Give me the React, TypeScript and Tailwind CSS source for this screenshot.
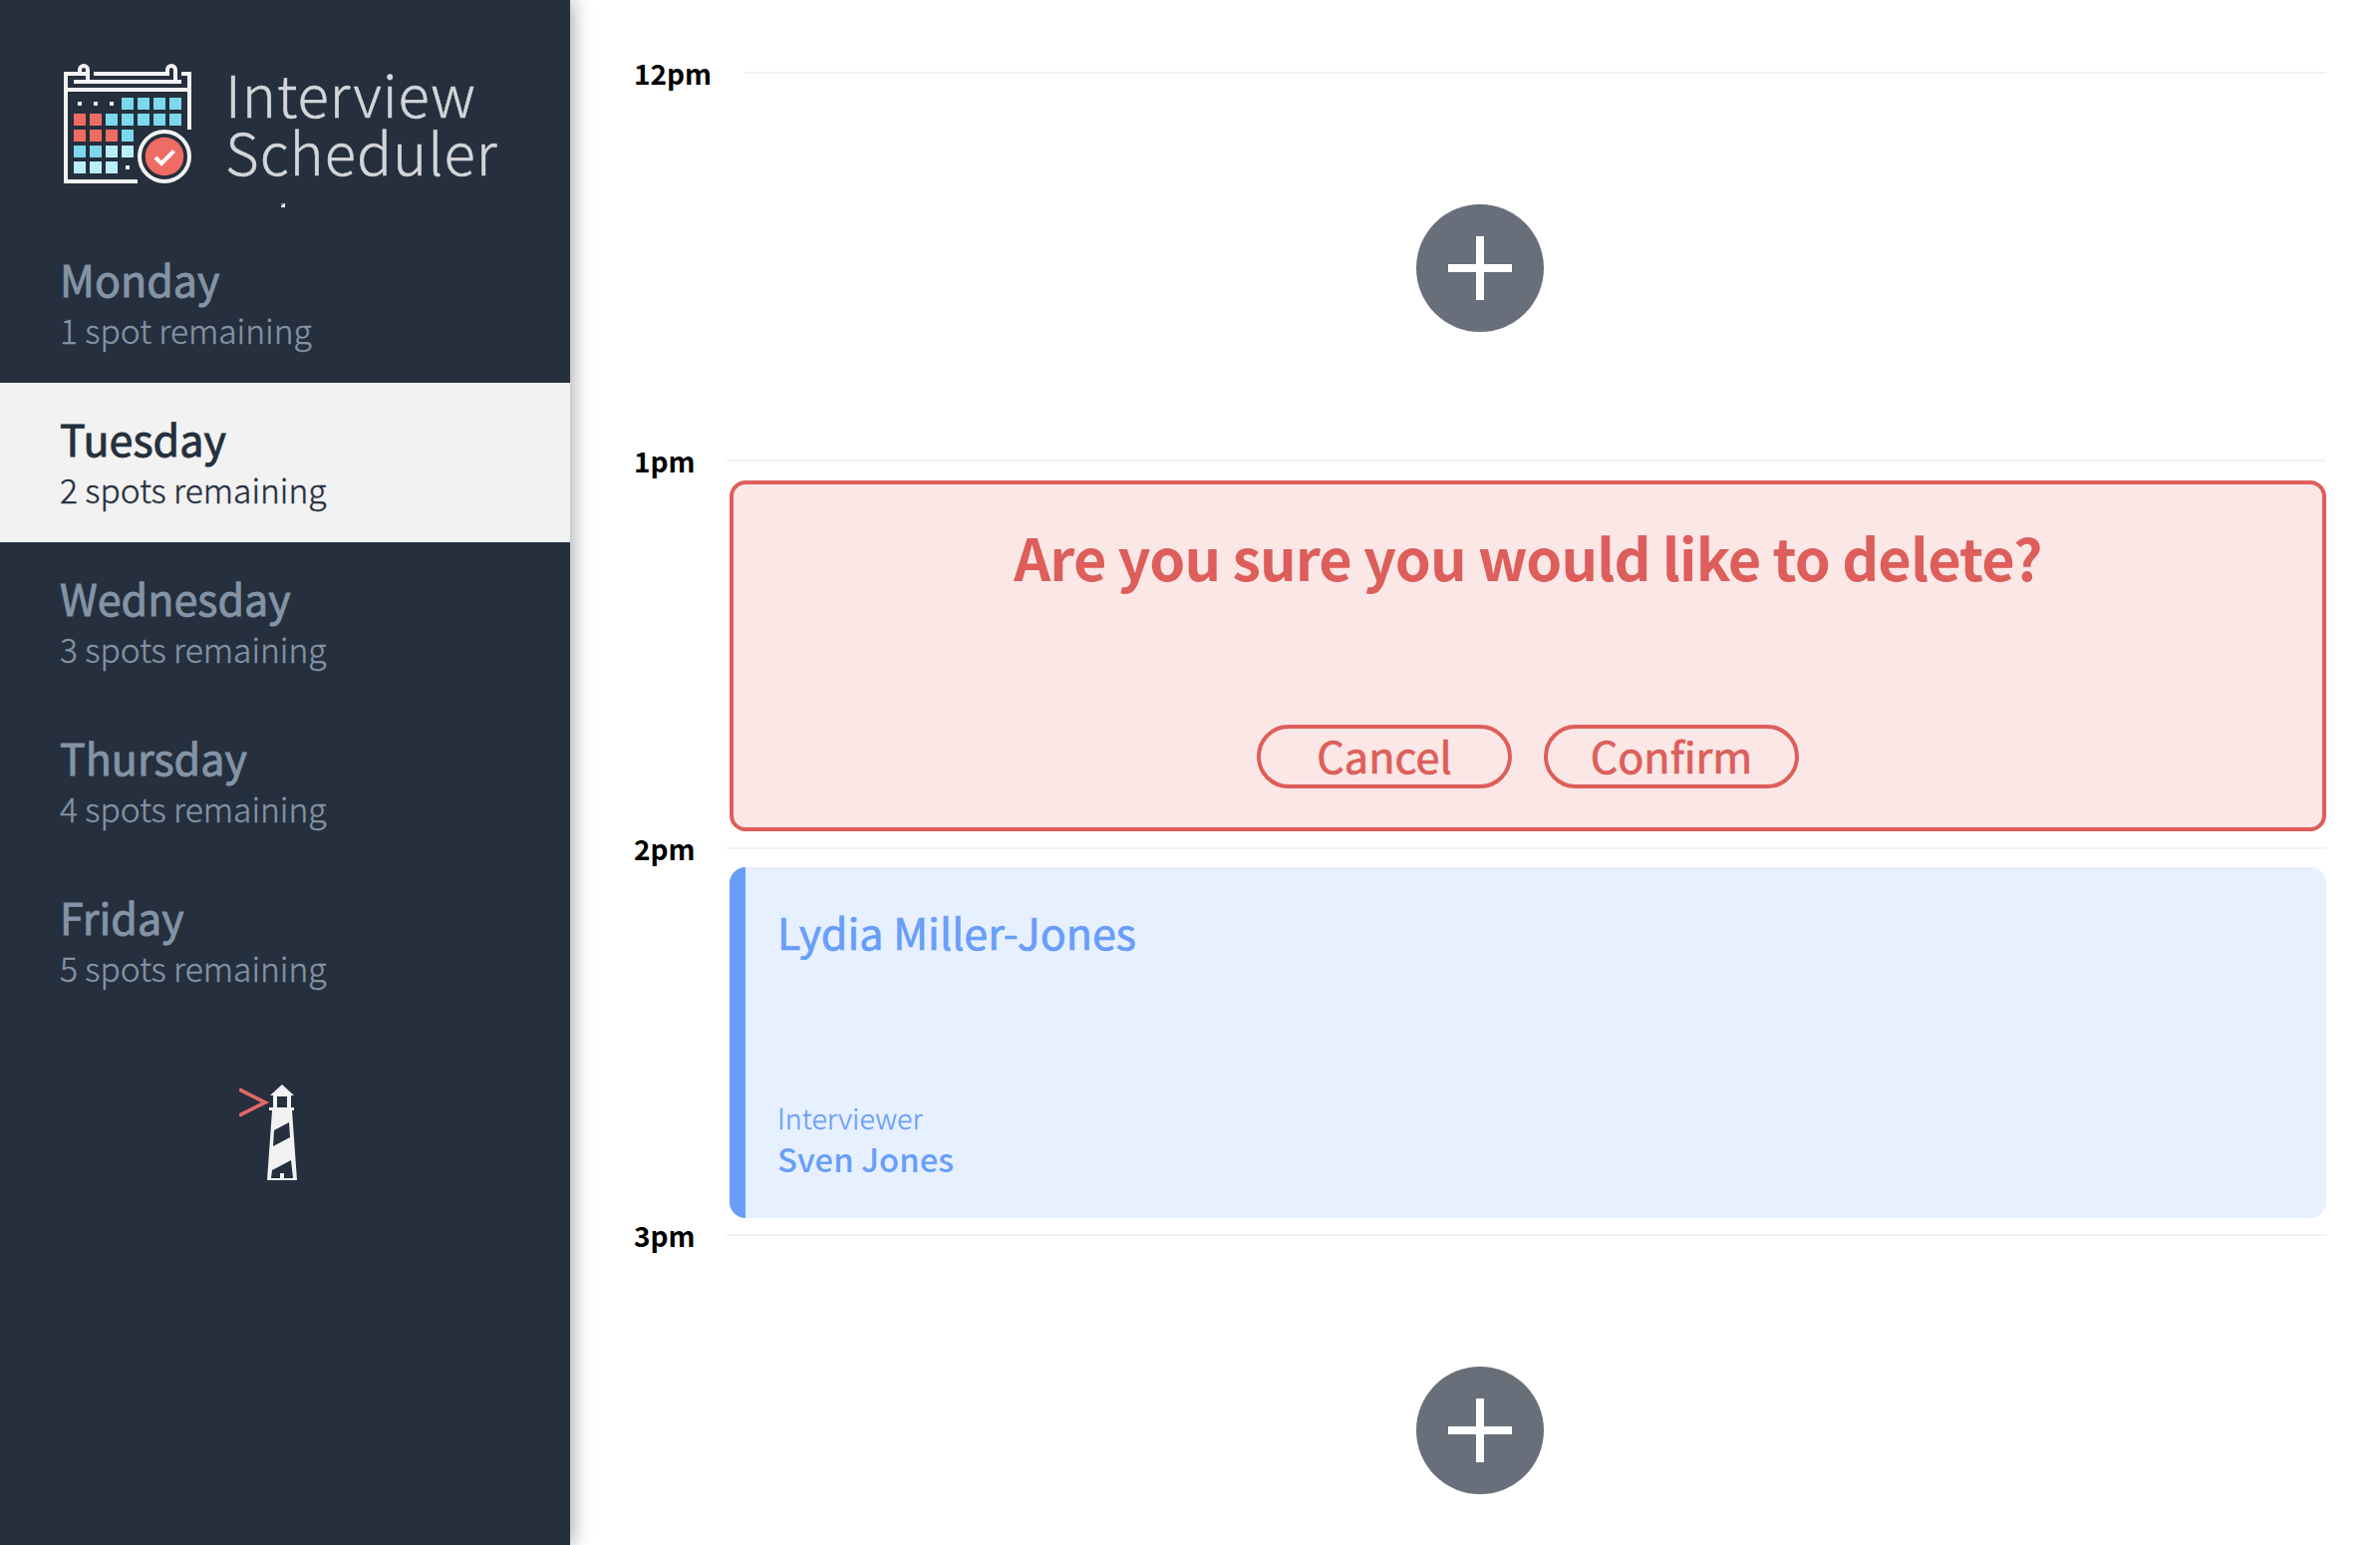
const days = [
  { name: "Monday", spots: "1 spot remaining" },
  { name: "Tuesday", spots: "2 spots remaining", selected: true },
  { name: "Wednesday", spots: "3 spots remaining" },
  { name: "Thursday", spots: "4 spots remaining" },
  { name: "Friday", spots: "5 spots remaining" },
];

const BLUE = "#7dd8ee";
const PALE = "#b9effa";
const CORAL = "#ee6c63";

const cells: (string | null)[][] = [
  [null, null, null, BLUE, BLUE, BLUE, BLUE],
  [CORAL, CORAL, BLUE, BLUE, BLUE, BLUE, BLUE],
  [CORAL, CORAL, CORAL, BLUE],
  [BLUE, BLUE, PALE, PALE],
  [PALE, PALE, PALE],
];

function CalendarLogo() {
  return (
    <svg width="128" height="122" viewBox="0 0 128 122" className="block shrink-0">
      <g fill="none" stroke="#f2f2f2" strokeWidth="4">
        <path d="M24 11H2V119H74" />
        <path d="M2 27H124" />
        <path d="M10 19H118" />
        <path d="M30 11H106" />
        <path d="M118 11H126V67" />
        <path d="M16 11V7a4 4 0 0 1 8 0V19" />
        <path d="M104 11V7a4 4 0 0 1 8 0V19" />
      </g>
      {cells.map((row, r) =>
        row.map((c, i) =>
          c ? <rect key={`${r}-${i}`} x={10 + i * 16} y={35 + r * 16} width="12" height="12" fill={c} /> : null,
        ),
      )}
      <g fill="#f2f2f2">
        <rect x="14" y="39" width="4" height="4" />
        <rect x="30" y="39" width="4" height="4" />
        <rect x="46" y="39" width="4" height="4" />
        <rect x="62" y="103" width="4" height="4" />
      </g>
      <circle cx="101" cy="94" r="25" fill="#252f3d" stroke="#f2f2f2" strokeWidth="4" />
      <circle cx="101" cy="94" r="19.3" fill={CORAL} />
      <path d="M92 95l6 6 12.500-12.500" fill="none" stroke="#fff" strokeWidth="4" />
    </svg>
  );
}

function Lighthouse() {
  return (
    <svg width="60" height="98" viewBox="0 0 60 98" className="block">
      <path d="M0 5L26 18L0 31" fill="none" stroke="#e36a66" strokeWidth="3.800" />
      <path d="M43 0L55 11H31Z" fill="#f2f2f2" />
      <path d="M34 10H52V24H34ZM38 12V23H48V12Z" fill="#f2f2f2" fillRule="evenodd" />
      <path d="M30 23H55V26H53L58 96H28L33 26H30Z" fill="#f2f2f2" />
      <path d="M35 46L50 38L51 53L34 62Z" fill="#252f3d" />
      <path d="M33 86L52 76L54 94H45V89H41V94H32Z" fill="#252f3d" />
    </svg>
  );
}

function AddButton() {
  return (
    <div className="flex h-32 w-32 items-center justify-center rounded-full bg-[#686f7a]">
      <svg width="64" height="64" viewBox="0 0 64 64">
        <path d="M32 0V64M0 32H64" stroke="#fff" strokeWidth="8" />
      </svg>
    </div>
  );
}

function TimeHeader({ time, first }: { time: string; first?: boolean }) {
  return (
    <header className="flex h-[20px] items-start justify-between">
      <h4 className="-mt-[17px] text-[28px] leading-[36px] font-bold text-black">{time}</h4>
      <div className={first ? "h-[2px] w-[1588px] bg-[#f2f2f2]" : "h-[2px] w-[1605px] bg-[#f2f2f2]"} />
    </header>
  );
}

export default function App() {
  return (
    <main className="flex h-[1550px] w-[2388px] overflow-hidden bg-white font-['Noto_Sans_CJK_SC','Source_Sans_Pro',sans-serif]">
      <section className="z-10 flex w-[572px] shrink-0 flex-col bg-[#252f3d] shadow-[2px_0_18px_rgba(30,36,44,0.42)]">
        <div className="flex h-[204px] pt-[63px] pl-16">
          <CalendarLogo />
          <div className="mt-px pl-[34px] text-[58px] leading-[58px] font-extralight text-[#d3d5d9] [-webkit-text-stroke:0.500px_currentColor]">
            <div className="tracking-[0.900px]">Interview</div>
            <div className="tracking-[1px]">Scheduler</div>
          </div>
        </div>
        <div className="ml-[282px] h-1 w-1 bg-[linear-gradient(135deg,#8b9099_50%,#fff_50%)]" />
        <nav className="mt-4">
          {days.map((d) => (
            <div
              key={d.name}
              className={
                d.selected
                  ? "flex h-40 flex-col bg-[#f2f2f2] pt-[31px] pl-[60px] text-[#252f3d]"
                  : "flex h-40 flex-col pt-[31px] pl-[60px] text-[#8493a5]"
              }
            >
              <h2 className="text-[43px] leading-[48px] [-webkit-text-stroke:0.900px_currentColor]">{d.name}</h2>
              <h3 className="mt-2 text-[33.500px] leading-[40px] font-light [-webkit-text-stroke:0.400px_currentColor]">
                {d.spots}
              </h3>
            </div>
          ))}
        </nav>
        <div className="mt-[64px] ml-[240px]">
          <Lighthouse />
        </div>
      </section>

      <section className="flex w-[1762px] flex-col pt-[72px] pl-16">
        <article className="h-[389px] w-[1698px] shrink-0">
          <TimeHeader time="12pm" first />
          <div className="mt-[113px] ml-[785px]">
            <AddButton />
          </div>
        </article>

        <article className="h-[389px] shrink-0">
          <TimeHeader time="1pm" />
          <div className="mt-px ml-24 flex h-[352px] flex-col items-center rounded-2xl border-4 border-[#dd5e5a] bg-[#fae7e6] text-[#dd5e5a]">
            <h1 className="mt-[32px] text-[57.600px] leading-[80px] font-bold tracking-[-0.900px]">
              Are you sure you would like to delete?
            </h1>
            <div className="mt-[129px] flex gap-8">
              <button className="flex h-16 w-64 justify-center rounded-full border-4 border-[#dd5e5a] text-[43.200px] leading-[53px] [-webkit-text-stroke:0.700px_currentColor]">
                Cancel
              </button>
              <button className="flex h-16 w-64 justify-center rounded-full border-4 border-[#dd5e5a] text-[43.200px] leading-[53px] [-webkit-text-stroke:0.700px_currentColor]">
                Confirm
              </button>
            </div>
          </div>
        </article>

        <article className="h-[388px] shrink-0">
          <TimeHeader time="2pm" />
          <div className="ml-24 flex h-[352px] flex-col justify-between rounded-2xl border-l-[16px] border-[#689ef9] bg-[#e7f0fe] pt-[33.500px] pb-[39.500px] pl-8 text-[#689ef9]">
            <h2 className="text-[43px] leading-[60px] [-webkit-text-stroke:0.700px_currentColor]">Lydia Miller-Jones</h2>
            <div>
              <h4 className="text-[28.600px] leading-[40px] font-light [-webkit-text-stroke:0.300px_currentColor]">
                Interviewer
              </h4>
              <h3 className="text-[32.800px] leading-[42px] font-medium">Sven Jones</h3>
            </div>
          </div>
        </article>

        <article className="shrink-0">
          <TimeHeader time="3pm" />
          <div className="mt-[113px] ml-[785px]">
            <AddButton />
          </div>
        </article>
      </section>
    </main>
  );
}
